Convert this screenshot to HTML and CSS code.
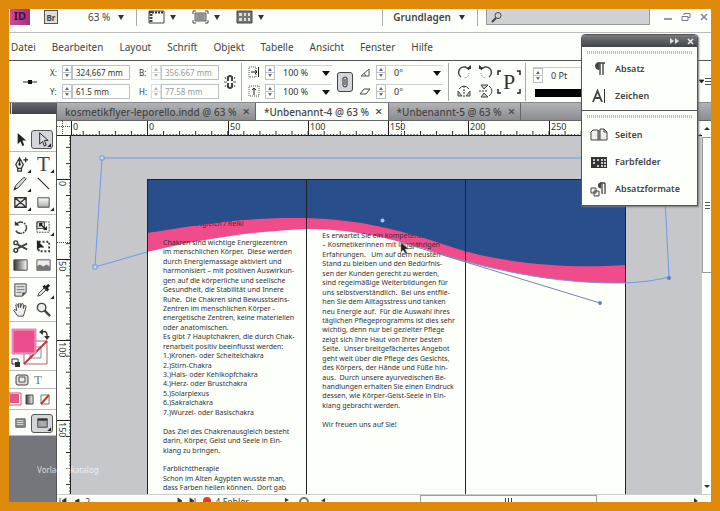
FILE: index.html
```html
<!DOCTYPE html>
<html lang="de">
<head>
<meta charset="utf-8">
<title>Unbenannt-4</title>
<link rel="stylesheet" href="styles.css">
</head>
<body>
<svg class="defs" aria-hidden="true">
  <defs>
    <linearGradient id="fade" x1="0" x2="1"><stop offset="0" stop-color="#333"/><stop offset="1" stop-color="#fff"/></linearGradient>
    <linearGradient id="soft" x1="0" x2="0" y1="0" y2="1"><stop offset="0" stop-color="#fff"/><stop offset="1" stop-color="#aaa"/></linearGradient>
    <symbol id="corner" viewBox="0 0 18 18"><path d="M17 13v4h-4z" fill="#222"/></symbol>
  </defs>
</svg>
<div class="app">
  <header class="appbar">
    <span class="logo">ID</span>
    <button class="bridge">Br</button>
    <button class="zoom">63 % <i class="caret"></i></button>
    <span class="rule"></span>
    <button class="view" aria-label="Ansichtsoptionen"><svg width="17" height="14" viewBox="0 0 17 14"><path d="M1 1h15v12H1z" fill="#fff" stroke="#444"/><path d="M1 2.500h15" stroke="#333" stroke-width="2" stroke-dasharray="2 1"/><path d="M3 1v12" stroke="#444" stroke-width="3" stroke-dasharray="2 1"/></svg><i class="caret"></i></button>
    <button class="view" aria-label="Bildschirmmodus"><svg width="17" height="14" viewBox="0 0 17 14"><path d="M3 3h11v8H3z" fill="#aaa" stroke="#666"/><path d="M1 4V1h3M13 1h3v3M16 10v3h-3M4 13H1v-3" fill="none" stroke="#444"/><path d="M5 5h7M5 7h7M5 9h7" stroke="#777"/></svg><i class="caret"></i></button>
    <button class="view" aria-label="Dokumente anordnen"><svg width="17" height="14" viewBox="0 0 17 14"><path d="M1 1h15v12H1z" fill="#777" stroke="#444"/><path d="M3 3h3v3H3zM8 3h2v3H8zM12 3h2v3h-2zM3 8h3v3H3zM8 8h2v3H8zM12 8h2v3h-2z" fill="#ddd"/></svg><i class="caret"></i></button>
    <span class="rule push"></span>
    <button class="workspace">Grundlagen <i class="caret"></i></button>
    <span class="rule"></span>
    <label class="search"><svg width="12" height="12" viewBox="0 0 12 12"><circle cx="7" cy="4.500" r="3" fill="none" stroke="#444"/><path d="M5 7l-4 4" stroke="#444" stroke-width="2"/></svg><input type="search" aria-label="Suchen"></label>
    <span class="window">
      <button aria-label="Minimieren"><svg width="10" height="10" viewBox="0 0 10 10"><path d="M1 7h8" stroke="#778" stroke-width="1.500"/></svg></button>
      <button aria-label="Wiederherstellen"><svg width="10" height="10" viewBox="0 0 10 10"><path d="M3 3V1.500h6v4H7M1 4.500h6v4H1z" fill="none" stroke="#778"/></svg></button>
      <button aria-label="Schließen"><svg width="10" height="10" viewBox="0 0 10 10"><path d="M2 2l6 6M8 2L2 8" stroke="#778899" stroke-width="1.500"/></svg></button>
    </span>
  </header>

  <nav class="menu">
    <a href="#">Datei</a><a href="#">Bearbeiten</a><a href="#">Layout</a><a href="#">Schrift</a><a href="#">Objekt</a><a href="#">Tabelle</a><a href="#">Ansicht</a><a href="#">Fenster</a><a href="#">Hilfe</a>
  </nav>

  <div class="control">
    <svg class="ref" width="14" height="8" viewBox="0 0 14 8"><path d="M0 4h14" stroke="#222"/><path d="M5 2h4v4H5z" fill="#111"/></svg>
    <div class="pairs">
      <label for="x">X:</label><i class="spin"></i><input id="x" value="324,667 mm">
      <label for="y">Y:</label><i class="spin"></i><input id="y" value="61.5 mm">
    </div>
    <div class="pairs off">
      <label for="w">B:</label><i class="spin"></i><input id="w" value="356.667 mm" disabled>
      <label for="h">H:</label><i class="spin"></i><input id="h" value="77.58 mm" disabled>
    </div>
    <svg class="chain" width="12" height="16" viewBox="0 0 12 16"><path d="M4 7V3q2-2 4 0v4M4 9v4q2 2 4 0V9" fill="none" stroke="#444" stroke-width="2"/><path d="M1 3l1 2M11 3l-1 2M0 8h3M9 8h3M1 13l1-2M11 13l-1-2" stroke="#555"/></svg>
    <span class="rule tall"></span>
    <div class="combos">
      <svg width="12" height="12" viewBox="0 0 12 12"><path d="M1 1h7v10H1z" fill="none" stroke="#555" stroke-dasharray="1 1"/><path d="M3 6h6M7 4l2 2-2 2M10.500 1v10" fill="none" stroke="#222"/></svg><i class="spin"></i><span class="drop"><select aria-label="X-Skalierung"><option>100 %</option></select></span>
      <svg width="12" height="12" viewBox="0 0 12 12"><path d="M1 1h10v10H1z" fill="none" stroke="#555" stroke-dasharray="1 1"/><path d="M6 10V3M4 5l2-2 2 2" fill="none" stroke="#222"/></svg><i class="spin"></i><span class="drop"><select aria-label="Y-Skalierung"><option>100 %</option></select></span>
    </div>
    <button class="link" aria-label="Proportionen verketten"><svg width="8" height="12" viewBox="0 0 8 12"><path d="M2 6V2q2-2 4 0v4M2 6v4q2 2 4 0V6M4 3v6" fill="none" stroke="#333"/></svg></button>
    <div class="combos">
      <svg width="12" height="12" viewBox="0 0 12 12"><path d="M2 10h8V3zM5 7l2 3" fill="none" stroke="#555"/></svg><i class="spin"></i><span class="drop"><select aria-label="Drehwinkel"><option>0°</option></select></span>
      <svg width="12" height="12" viewBox="0 0 12 12"><path d="M1 9l4-5h6L7 9z" fill="none" stroke="#444"/></svg><i class="spin"></i><span class="drop"><select aria-label="Scherwinkel"><option>0°</option></select></span>
    </div>
    <span class="rule tall"></span>
    <div class="turn">
      <svg width="14" height="14" viewBox="0 0 14 14"><path d="M4 12A5.500 5.500 0 1 1 12 5" fill="none" stroke="#444" stroke-width="1.500"/><path d="M9 4h5v-4z" fill="#333"/><path d="M12 8a5 5 0 0 1-5 5" fill="none" stroke="#777" stroke-dasharray="1 1"/></svg>
      <svg width="14" height="14" viewBox="0 0 14 14"><path d="M10 12A5.500 5.500 0 1 0 2 5" fill="none" stroke="#444" stroke-width="1.500"/><path d="M5 4H0v-4z" fill="#333"/><path d="M2 8a5 5 0 0 0 5 5" fill="none" stroke="#777" stroke-dasharray="1 1"/></svg>
      <svg width="14" height="14" viewBox="0 0 14 14"><path d="M1 12V7l4 5zM13 12V7l-4 5z" fill="#ccc" stroke="#444"/><path d="M7 2v12" stroke="#333" stroke-dasharray="2 1"/><path d="M2 5q5-6 10 0" fill="none" stroke="#444"/></svg>
      <svg width="14" height="14" viewBox="0 0 14 14"><path d="M2 1h7L5 5zM2 13h7L5 9z" fill="#ccc" stroke="#444"/><path d="M0 7h9" stroke="#333" stroke-dasharray="2 1"/><path d="M10 2q6 5 0 10" fill="none" stroke="#444"/></svg>
    </div>
    <span class="glyph">P<svg width="24" height="24" viewBox="0 0 24 24"><path d="M1 5V1h3M20 1h3v4M23 19v4h-3M4 23H1v-4" fill="none" stroke="#222" stroke-width="1.500"/></svg></span>
    <span class="rule tall"></span>
    <div class="stroke">
      <div class="weight"><i class="spin"></i><input aria-label="Konturstärke" value="0 Pt"></div>
      <div class="line"></div>
    </div>
    <button class="flyout" aria-label="Bedienfeldmenü"><svg width="12" height="9" viewBox="0 0 12 9"><path d="M0 3h5L2.500 6zM6 1.500h6M6 4.500h6M6 7.500h6" fill="#222" stroke="#222" stroke-width=".8"/></svg></button>
  </div>

  <main class="work">
    <aside class="tools">
      <div class="tools-head"></div>
      <div class="group first">
        <button aria-label="Auswahl"><svg viewBox="0 0 18 18"><path d="M6 2v12l3-3 2 5 2-1-2-5h4z" fill="#222"/></svg></button>
        <button class="on" aria-label="Direktauswahl"><svg viewBox="0 0 18 18"><path d="M6 2v12l3-3 2 5 2-1-2-5h4z" fill="#ddd" stroke="#222"/></svg><svg class="more"><use href="#corner"/></svg></button>
      </div>
      <div class="group">
        <button aria-label="Zeichenstift"><svg viewBox="0 0 18 18"><path d="M8 2L4 9l2 4h4l2-4zM8 3v6M6 13v3h4v-3" fill="#eee" stroke="#333" stroke-width="1.300"/><circle cx="8" cy="9" r="1.200"/><path d="M12 4h5M14.500 1.500v5" stroke="#222" stroke-width="1.300"/></svg><svg class="more"><use href="#corner"/></svg></button>
        <button class="type" aria-label="Text">T<svg class="more"><use href="#corner"/></svg></button>
        <button aria-label="Buntstift"><svg viewBox="0 0 18 18"><path d="M2 16l2-5 8-8q2-1 3 1l-8 9z" fill="#ddd" stroke="#333"/><path d="M2 16l1-3 2 1z" fill="#222"/></svg><svg class="more"><use href="#corner"/></svg></button>
        <button aria-label="Linienzeichner"><svg viewBox="0 0 18 18"><path d="M3 3l12 12" stroke="#333" stroke-width="1.300"/></svg></button>
        <button aria-label="Rechteckrahmen"><svg viewBox="0 0 18 18"><path d="M3 4h12v10H3zM3 4l12 10M15 4L3 14" fill="#eee" stroke="#333" stroke-width="1.400"/></svg><svg class="more"><use href="#corner"/></svg></button>
        <button aria-label="Rechteck"><svg viewBox="0 0 18 18"><path d="M3 4h12v10H3z" fill="url(#soft)" stroke="#444"/></svg><svg class="more"><use href="#corner"/></svg></button>
      </div>
      <div class="group">
        <button aria-label="Drehen"><svg viewBox="0 0 18 18"><path d="M5 5a6 6 0 1 1-1 7" fill="none" stroke="#444" stroke-width="1.500" stroke-dasharray="7 1 2 1"/><path d="M3 2v5h5z" fill="#333"/></svg></button>
        <button aria-label="Skalieren"><svg viewBox="0 0 18 18"><path d="M2 3h8v7H2z" fill="#ddd" stroke="#444"/><path d="M2 3h13v11H2z" fill="none" stroke="#444" stroke-dasharray="2 1"/><path d="M5 5l7 6M5 8V5h3M12 8v3H9" fill="none" stroke="#222" stroke-width="1.400"/></svg><svg class="more"><use href="#corner"/></svg></button>
        <button aria-label="Schere"><svg viewBox="0 0 18 18"><path d="M6 7l10 5M6 11l10-5" stroke="#444" stroke-width="2"/><circle cx="4" cy="5" r="2" fill="none" stroke="#333" stroke-width="1.500"/><circle cx="4" cy="13" r="2" fill="none" stroke="#333" stroke-width="1.500"/></svg></button>
        <button aria-label="Frei transformieren"><svg viewBox="0 0 18 18"><path d="M4 4h11v10H4z" fill="none" stroke="#333" stroke-width="2" stroke-dasharray="2 2"/><path d="M2 2v11l3-3 5 0z" fill="#222"/></svg></button>
        <button aria-label="Verlaufsfarbfeld"><svg viewBox="0 0 18 18"><path d="M2 3h14v11H2z" fill="url(#fade)" stroke="#444"/></svg></button>
        <button aria-label="Weiche Verlaufskante"><svg viewBox="0 0 18 18"><path d="M2 3h14v11H2z" fill="#eee" stroke="#555"/><path d="M2 10l3-2 4 2 3-2 4 2v4H2z" fill="#777"/></svg></button>
      </div>
      <div class="group">
        <button aria-label="Notiz"><svg viewBox="0 0 18 18"><path d="M3 2h12v9l-4 4H3z" fill="#ddd" stroke="#444"/><path d="M5 5h8M5 8h8M5 11h5" stroke="#777"/><path d="M15 11h-4v4z" fill="#444"/></svg></button>
        <button aria-label="Pipette"><svg viewBox="0 0 18 18"><path d="M3 15l1-3 6-6 2 2-6 6z" fill="#eee" stroke="#333"/><path d="M9 4l5 5M11 7l4-4" stroke="#222" stroke-width="3"/></svg><svg class="more"><use href="#corner"/></svg></button>
        <button aria-label="Hand"><svg viewBox="0 0 18 18"><path d="M6 16l-4-6q0-2 3 0L4 4q1-2 2 0l1 3V3q1-2 2 0v4l1-4q2-1 2 1v4l1-3q2-1 2 1l-2 7-1 3z" fill="#eee" stroke="#444"/></svg></button>
        <button aria-label="Zoom"><svg viewBox="0 0 18 18"><circle cx="7" cy="7" r="4.500" fill="#eee" stroke="#444" stroke-width="1.500"/><path d="M10 10l6 6" stroke="#444" stroke-width="2.500"/></svg></button>
      </div>
      <div class="swatches">
        <svg width="46" height="48" viewBox="0 0 46 48"><path d="M15 19h23v23H15z" fill="#fff" stroke="#a66"/><path d="M21 25h11v11H21z" fill="#fff" stroke="#888"/><path d="M15 42L38 19" stroke="#b34" stroke-width="2"/><path d="M3 7h24v25H3z" fill="#ee4d8c" stroke="#c9a"/><path d="M4 8h22v23H4z" fill="none" stroke="#f9c"/><path d="M33 10q6-2 5 6" fill="none" stroke="#333" stroke-width="1.500"/><path d="M34 7v6l-4-3zM35 14h6l-3 4z" fill="#333"/><path d="M3 37h6v5H3z" fill="#fff" stroke="#333"/><path d="M6 40h5v5H6z" fill="#333"/></svg>
      </div>
      <div class="modes">
        <svg width="46" height="17" viewBox="0 0 46 17"><rect x="7" y="4" width="12" height="10" rx="2" fill="#ddd" stroke="#444"/><path d="M10 6h6v5h-6z" fill="#eee" stroke="#555"/><text x="25" y="13" class="mode-t">T</text></svg>
      </div>
      <div class="fills">
        <svg width="46" height="20" viewBox="0 0 46 20"><path d="M0 4h12v12H0z" fill="#fff" stroke="#b57"/><path d="M1 5h9v9H1z" fill="#e4558a"/><path d="M17 6h7v9h-7z" fill="url(#fade)" stroke="#444"/><path d="M32 6h8v9h-8z" fill="#fff" stroke="#777"/><path d="M32 15l8-9" stroke="#c33" stroke-width="2"/></svg>
      </div>
      <div class="screens">
        <button aria-label="Normal"><svg viewBox="0 0 18 18"><path d="M4 4h10v9H4z" fill="#888" stroke="#666"/><path d="M5 6h7M5 8h7M5 10h7" stroke="#ddd"/></svg></button>
        <button class="on" aria-label="Vorschau"><svg viewBox="0 0 18 18"><path d="M4 4h10v9H4z" fill="#aaa" stroke="#444"/><path d="M4 5h10" stroke="#333" stroke-width="2"/></svg><svg class="more"><use href="#corner"/></svg></button>
      </div>
    </aside>

    <section class="doc">
      <div class="tabs">
        <div class="tab"><a href="#">kosmetikflyer-leporello.indd @ 63 %</a><button>×</button></div>
        <div class="tab current"><a href="#">*Unbenannt-4 @ 63 %</a><button>×</button></div>
        <div class="tab"><a href="#">*Unbenannt-5 @ 63 %</a><button>×</button></div>
      </div>
      <svg class="ruler-h">
        <defs><pattern id="th" x="90" y="0" width="16.060" height="15" patternUnits="userSpaceOnUse"><path d="M.5 10v5M3.700 13v2M6.900 13v2M10.100 13v2M13.300 13v2" stroke="#222"/></pattern></defs>
        <rect x="14" width="100%" height="15" fill="url(#th)"/>
        <path d="M0 14.500h3000M90.500 0v15M171.500 0v15M251.500 0v15M331.500 0v15M411.500 0v15M492.500 0v15M14.500 0v15" stroke="#222"/>
        <path d="M0 5.500h14M5.500 0v14M344.500 0v14" stroke="#444" stroke-dasharray="1 1"/>
        <g><text x="16" y="9">0</text><text x="92" y="9">0</text><text x="173" y="9">50</text><text x="253" y="9">100</text><text x="333" y="9">150</text><text x="413" y="9">200</text><text x="494" y="9">250</text></g>
      </svg>
      <div class="stage">
        <svg class="ruler-v">
          <defs><pattern id="tv" x="0" y="43" width="14" height="16.060" patternUnits="userSpaceOnUse"><path d="M9 .5h5M12 3.700h2M12 6.900h2M12 10.100h2M12 13.300h2" stroke="#222"/></pattern></defs>
          <rect width="14" height="100%" fill="url(#tv)"/>
          <path d="M13.500 0v3000M0 43.500h14M0 123.500h14M0 204.500h14M0 284.500h14" stroke="#222"/>
          <path d="M0 106.500h14" stroke="#444" stroke-dasharray="1 1"/>
          <g><text transform="translate(2 45) rotate(90)">0</text><text transform="translate(2 125) rotate(90)">50</text><text transform="translate(2 206) rotate(90)">100</text><text transform="translate(2 286) rotate(90)">150</text></g>
        </svg>
        <div class="canvas">
          <div class="sheet"></div>
          <svg class="art"><g transform="translate(-71 -136)"><path d="M147 180H625V283C560 284 500 272 440 254C400 240 350 228 306 229C240 232 190 242 147 252z" fill="#f04c8c"/></g></svg>
          <div class="copy">
            <p>Chakrenausgleich / Reiki<br><br>Chakren sind wichtige Energiezentren<br>im menschlichen Körper.&nbsp; Diese werden<br>durch Energiemassage aktiviert und<br>harmonisiert – mit positiven Auswirkun-<br>gen auf die körperliche und seelische<br>Gesundheit, die Stabilität und Innere<br>Ruhe.&nbsp; Die Chakren sind Bewusstseins-<br>Zentren im menschlichen Körper -<br>energetische Zentren, keine materiellen<br>oder anatomischen.<br>Es gibt 7 Hauptchakren, die durch Chak-<br>renarbeit positiv beeinflusst werden:<br>1.)Kronen- oder Scheitelchakra<br>2.)Stirn-Chakra<br>3.)Hals- oder Kehlkopfchakra<br>4.)Herz- oder Brustchakra<br>5.)Solarplexus<br>6.)Sakralchakra<br>7.)Wurzel- oder Basischakra<br><br>Das Ziel des Chakrenausgleich besteht<br>darin, Körper, Geist und Seele in Ein-<br>klang zu bringen.<br><br>Farblichttherapie<br>Schon im Alten Ägypten wusste man,<br>dass Farben heilen können.&nbsp; Dort gab</p>
            <p class="lower">Es erwartet Sie ein kompetentes<br>– Kosmetikerinnen mit langjährigen<br>Erfahrungen.&nbsp;&nbsp; Um auf dem neusten<br>Stand zu bleiben und den Bedürfnis-<br>sen der Kunden gerecht zu werden,<br>sind regelmäßige Weiterbildungen für<br>uns selbstverständlich.&nbsp; Bei uns entflie-<br>hen Sie dem Alltagsstress und tanken<br>neu Energie auf.&nbsp; Für die Auswahl ihres<br>täglichen Pflegeprogramms ist dies sehr<br>wichtig, denn nur bei gezielter Pflege<br>zeigt sich Ihre Haut von Ihrer besten<br>Seite.&nbsp; Unser breitgefächertes Angebot<br>geht weit über die Pflege des Gesichts,<br>des Körpers, der Hände und Füße hin-<br>aus.&nbsp; Durch unsere ayurvedischen Be-<br>handlungen erhalten Sie einen Eindruck<br>dessen, wie Körper-Geist-Seele in Ein-<br>klang gebracht werden.<br><br>Wir freuen uns auf Sie!</p>
          </div>
          <svg class="art"><g transform="translate(-71 -136)">
            <path d="M147 179H625V265C580 268 530 266 480 255C440 246 390 220 306 218C240 217 190 226 147 233z" fill="#284e8c"/>
            <path d="M147.500 600V179.500H625.500V600M306.500 179v500M465.500 179v500" fill="none" stroke="#222"/>
            <path d="M147 252L95 267L102 158H663L669 277Q650 282 625 283M625 283C560 284 500 272 440 254" fill="none" stroke="#6f9ae0"/>
            <path d="M400 242L600 303" fill="none" stroke="#7088a8"/>
            <path d="M100 156h4v4h-4zM93 265h4v4h-4z" fill="#ccd8ee" stroke="#6f9ae0"/>
            <circle cx="669" cy="278" r="2" fill="#5580d8"/><circle cx="600" cy="303" r="2" fill="#6688b0"/><circle cx="382.500" cy="220.500" r="2" fill="#9cc8ff"/>
            <path d="M401 243v9l2-2 3 4 1-1-2-4h4z" fill="#222" stroke="#888" stroke-width=".5"/>
          </g></svg>
        </div>
      </div>
      <div class="scroll-v"><svg width="9" height="8" viewBox="0 0 9 8"><path d="M2 5h6L5 2z" fill="#333"/></svg><div class="thumb-v"><i></i></div><svg class="end" width="9" height="8" viewBox="0 0 9 8"><path d="M2 3h6L5 6z" fill="#333"/></svg></div>
      <footer class="status">
        <svg width="28" height="8" viewBox="0 0 28 8"><path d="M3 3v5M9 3v5L5 6zM22 4v4l-4-2z" fill="#333" stroke="#333" stroke-width=".8"/></svg>
        <span class="pageno">2</span>
        <svg width="22" height="8" viewBox="0 0 22 8"><path d="M2 3v5l4-2zM14 3v5l4-2zM19 3v5" fill="#333" stroke="#333" stroke-width=".8"/></svg>
        <i class="dot"></i><span>4 Fehler</span>
        <svg class="tail" width="48" height="8" viewBox="0 0 48 8"><path d="M4 3v4l4-2zM44 3v4l-4-1z" fill="#333"/><circle cx="23" cy="7" r="4" fill="none" stroke="#777" stroke-width="2"/></svg>
        <div class="track"><div class="thumb-h"><i></i></div><svg width="6" height="8" viewBox="0 0 6 8"><path d="M1 3v5l4-2z" fill="#333"/></svg></div>
      </footer>
    </section>
  </main>

  <aside class="panel">
    <div class="panel-head"><svg width="9" height="6" viewBox="0 0 9 6"><path d="M0 0v6l4-3zM5 0v6l4-3z" fill="#ddd"/></svg><svg width="7" height="7" viewBox="0 0 7 7"><path d="M1 1l5 5M6 1L1 6" stroke="#eee" stroke-width="1.500"/></svg></div>
    <div class="set">
      <button><svg width="18" height="16" viewBox="0 0 18 16"><path d="M9 2h6M10 2v12M13 2v12" stroke="#444" stroke-width="1.400"/><path d="M9 1.500a3 3 0 0 0 0 7z" fill="#444" stroke="#444"/></svg>Absatz</button>
      <button><svg width="18" height="16" viewBox="0 0 18 16"><path d="M3 14L7.500 3 12 14M5 10h5" fill="none" stroke="#444" stroke-width="1.800"/><path d="M14.500 1v14" stroke="#333"/></svg>Zeichen</button>
    </div>
    <div class="set">
      <button><svg width="18" height="16" viewBox="0 0 18 16"><path d="M9 3v11M1 5l2-2h5v10H1zM10 2h4l3 3v8h-7z" fill="#eee" stroke="#444"/><path d="M14 2v3h3" fill="none" stroke="#444"/></svg>Seiten</button>
      <button><svg width="18" height="16" viewBox="0 0 18 16"><path d="M1 3h16v11H1z" fill="#333"/><path d="M3 5h2v2H3zM7 5h2v2H7zM11 5h2v2h-2zM14 5h2v2h-2zM3 8h2v2H3zM11 8h2v2h-2zM14 8h2v2h-2zM7 11h2v2H7zM11 11h2v2h-2zM14 11h2v2h-2z" fill="#ccc"/></svg>Farbfelder</button>
      <button><svg width="18" height="16" viewBox="0 0 18 16"><path d="M10 2h5M12 2v11M15 2v11" stroke="#444" stroke-width="1.300"/><path d="M11 1.500a2.500 2.500 0 0 0 0 6z" fill="#444"/><path d="M1 7h5v5H1zM4 10h5v5H4z" fill="#eee" stroke="#444"/></svg>Absatzformate</button>
    </div>
  </aside>
  <span class="mark">Vorlagenkatalog</span>
</div>
</body>
</html>
```
FILE: styles.css
```css
* { box-sizing: border-box; }
body {
  margin: 0;
  padding: 9px;
  background: #e08a0c;
  font-family: "Noto Sans", "Open Sans", sans-serif;
  font-size: 9px;
  color: #444;
}
button, input, select { font: inherit; color: inherit; background: none; border: 0; padding: 0; margin: 0; border-radius: 0; }
button { display: inline-flex; align-items: center; }
a { color: inherit; text-decoration: none; }
svg { display: block; flex: none; }
.defs { position: absolute; width: 0; height: 0; }

.app {
  position: relative;
  height: calc(100vh - 18px);
  min-height: 440px;
  display: flex;
  flex-direction: column;
  overflow: hidden;
  background: #fcfffa;
}
.caret { border: 3px solid transparent; border-top: 5px solid #333; border-bottom: 0; }
.rule { width: 1px; height: 18px; background: #aaa; }

/* application bar */
.appbar { display: flex; align-items: center; height: 24px; padding-bottom: 7px; border-bottom: 1px solid #bbb; }
.logo { width: 20px; height: 16px; margin-left: 1px; background: linear-gradient(90deg, #d04c9c, #a03080); color: #411038; font-weight: 700; font-size: 11px; line-height: 13px; text-align: center; }
.bridge { margin-left: 14px; width: 14px; height: 14px; border: 1px solid #555; background: #ddd; justify-content: center; font-weight: 700; font-size: 8px; }
.zoom { margin-left: 30px; gap: 8px; font-size: 10px; }
.zoom + .rule { margin: 0 4px 0 12px; }
.view { gap: 5px; margin-left: 7px; margin-right: 9px; }
.push { margin-left: auto; }
.workspace { gap: 8px; margin: 0 12px 0 10px; font-weight: 600; font-size: 10px; }
.search { display: flex; align-items: center; width: 164px; height: 16px; margin-left: 8px; padding-left: 4px; border: 1px solid #999; border-top: 0; background: #d0d1d4; }
.search input { flex: 1; min-width: 0; }
.window { display: flex; gap: 8px; margin: 0 2px 0 13px; }

/* menu */
.menu { display: flex; gap: 16px; align-items: center; height: 28px; padding-left: 2px; border-bottom: 1px solid #555; font-size: 10px; }

/* control bar */
.control { display: flex; align-items: center; height: 42px; padding-left: 14px; border-bottom: 1px solid #888; color: #333; }
.pairs { display: grid; grid-template-columns: 12px 10px 58px; row-gap: 4px; margin-left: 13px; align-items: center; font-size: 8px; }
.off { margin-left: 9px; }
.off input { color: #999; }
.off .spin { opacity: .5; }
.pairs input { height: 15px; padding-left: 3px; border: 1px solid #bcc0c8; width: 100%; }
.spin { width: 10px; height: 15px; border: 1px solid #bcc0c8; background: linear-gradient(#bcc0c8, #bcc0c8) 0 6px / 8px 1px no-repeat; position: relative; }
.spin::before, .spin::after { content: ""; position: absolute; left: 2px; border: 2px solid transparent; }
.spin::before { top: 0; border-bottom: 3px solid #667; border-top: 0; margin-top: 2px; }
.spin::after { bottom: 2px; border-top: 3px solid #667; border-bottom: 0; }
.chain { margin: 0 5px; }
.tall { height: 38px; }
.combos { display: grid; grid-template-columns: 12px 10px 56px; column-gap: 3px; row-gap: 4px; align-items: center; margin-left: 6px; }
.combos .spin { margin-left: 2px; }
.drop { position: relative; border-top: 1px solid #d0d2d6; height: 15px; padding-left: 7px; }
.drop::after { content: ""; position: absolute; right: 2px; top: 5px; border: 4px solid transparent; border-top: 5px solid #111; border-bottom: 0; pointer-events: none; }
.drop select { appearance: none; display: block; width: 100%; height: 14px; }
.link { width: 16px; height: 20px; margin: 0 0 0 5px; justify-content: center; border: 1px solid #444; border-radius: 3px; background: #d4d6da; }
.link + .combos { margin-right: 5px; }
.turn { display: grid; grid-template-columns: 14px 14px; gap: 5px 8px; margin-left: 8px; }
.glyph { position: relative; width: 24px; height: 24px; margin: 0 4px; text-align: center; font: 22px/24px "Liberation Serif", serif; }
.glyph svg { position: absolute; inset: 0; }
.stroke { flex: 1; margin-left: 7px; display: grid; row-gap: 6px; }
.weight { display: flex; gap: 8px; border-top: 1px solid #ccc; }
.weight input { width: 60px; }
.line { height: 8px; background: #000; margin: 0 90px 0 2px; }

/* tool box */
.work { flex: 1; min-height: 0; display: flex; }
.tools { width: 48px; border-right: 1px solid #555; background: #75767c; }
.tools-head { height: 11px; background: linear-gradient(#666a70, #3f4247); border-left: 3px double #ddd; }
.group { display: grid; grid-template-columns: 23px 23px; grid-auto-rows: 19px; padding: 3px 0 2px; border-bottom: 1px solid #bbb; background: #fcfffa; }
.first { padding-top: 16px; }
.tools button { position: relative; justify-content: center; }
.tools button svg { width: 17px; height: 17px; }
.tools .more { position: absolute; right: 0; bottom: 0; }
.tools .on { border: 1px solid #555; border-radius: 3px; background: #d4d6da; margin-right: 2px; margin-left: -1px; }
.type { font: 21px/19px "Liberation Serif", serif; }
.swatches, .modes, .fills, .screens { background: #fcfffa; border-bottom: 1px solid #bbb; }
.swatches { height: 49px; }
.modes { height: 18px; }
.mode-t { font: 13px "Liberation Serif", serif; fill: #777; }
.fills { height: 21px; }
.screens { display: grid; grid-template-columns: 23px 23px; height: 26px; padding: 4px 0; }

/* document window */
.doc { flex: 1; min-width: 0; display: grid; grid-template-columns: 1fr 9px; grid-template-rows: 18px 15px 1fr 8px; }
.tabs { grid-column: 1 / 3; display: flex; background: linear-gradient(#b2b3b6, #8b8c90); border-bottom: 1px solid #666; }
.tab { display: flex; align-items: center; gap: 6px; padding: 0 5px 0 8px; border-right: 1px solid #666; font-size: 10px; font-weight: 500; white-space: nowrap; }
.tab button { font-size: 13px; line-height: 13px; }
.current { background: #fcfffa; }
.ruler-h { width: 100%; height: 15px; }
.ruler-h text, .ruler-v text { font-size: 9px; fill: #333; }
.scroll-v { grid-column: 2; grid-row: 2 / 4; display: flex; flex-direction: column; padding: 4px 0; }
.thumb-v { height: 136px; margin-top: 4px; border: 1px solid #999; border-right: 0; display: flex; align-items: center; }
.thumb-v i { width: 5px; height: 7px; margin-left: 2px; background: repeating-linear-gradient(#555 0 1px, transparent 1px 3px); }
.end { margin-top: auto; }
.stage { grid-column: 1; grid-row: 3; display: flex; min-height: 0; }
.ruler-v { width: 14px; height: 100%; }
.canvas { position: relative; flex: 1; overflow: hidden; background: #c6c7cb; }
.sheet { position: absolute; left: 76px; top: 43px; bottom: 0; width: 478px; background: #fcfffa; }
.art { position: absolute; left: 0; top: 0; width: 100%; height: 100%; }
.copy { position: absolute; left: 76px; top: 43px; width: 478px; display: grid; grid-template-columns: repeat(3, 1fr); }
.copy p { margin: 0; padding: 40px 0 0 16px; font-size: 7px; line-height: 1.35; white-space: nowrap; color: #333; }
.copy .lower { padding-top: 52px; }

.status { grid-column: 1 / 3; display: flex; align-items: flex-start; overflow: hidden; border-top: 1px solid #ccc; line-height: 13px; }
.pageno { margin-right: 86px; }
.dot { width: 8px; height: 8px; margin: 2px 4px 0 5px; border-radius: 4px; background: #e33a2a; }
.tail { margin-left: 32px; }
.track { flex: 1; display: flex; justify-content: flex-end; padding-right: 12px; }
.thumb-h { width: 177px; height: 9px; margin-right: 96px; border: 1px solid #8a9; display: flex; justify-content: center; }
.thumb-h i { width: 7px; margin-top: 2px; background: repeating-linear-gradient(90deg, #444 0 1px, transparent 1px 3px); }

/* floating panel */
.panel { position: absolute; top: 25px; right: 13px; width: 117px; padding-bottom: 3px; border: 1px solid #555; border-radius: 4px 4px 0 0; background: #fcfffa; box-shadow: 1px 1px 2px #777; }
.panel-head { display: flex; justify-content: flex-end; align-items: center; gap: 8px; height: 12px; padding-right: 3px; background: linear-gradient(#777b80, #404347); border-radius: 3px 3px 0 0; }
.set { padding-top: 8px; background: repeating-linear-gradient(90deg, #bbb 0 1px, transparent 1px 2px) 5px 4px / 105px 3px no-repeat; }
.set + .set { margin-top: 1px; border-top: 1px solid #555; padding-top: 10px; }
.set button { display: flex; width: 100%; height: 27px; padding-left: 8px; gap: 7px; font-weight: 600; }

.mark { position: absolute; left: 28px; top: 455px; font-size: 8px; color: #fff; opacity: .7; }
```
